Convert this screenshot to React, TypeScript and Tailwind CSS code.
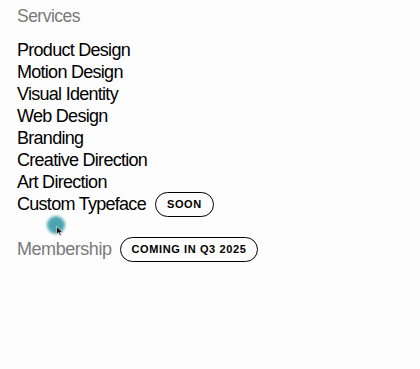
import React from "react";

const services = [
  "Product Design",
  "Motion Design",
  "Visual Identity",
  "Web Design",
  "Branding",
  "Creative Direction",
  "Art Direction",
];

const Badge = ({ children }: { children: React.ReactNode }) => (
  <span className="inline-flex h-[25px] shrink-0 items-center rounded-full border-[1.5px] border-black px-[11px] text-[11px] leading-none font-bold uppercase tracking-[0.055em] text-black">
    {children}
  </span>
);

export default function App() {
  return (
    <div
      className="relative h-[369px] w-[420px] bg-[#fdfdfd] px-[17px] pt-[5px]"
      style={{ fontFamily: "'Liberation Sans', Arial, sans-serif" }}
    >
      {/* Services */}
      <p className="h-[22px] text-[17.5px] leading-[22px] tracking-[-0.03em] text-[#7a7a7a]">
        Services
      </p>

      <ul className="mt-[12px] text-[18px] leading-[22px] tracking-[-0.04em] text-black">
        {services.map((s) => (
          <li key={s} className="h-[22px]">
            {s}
          </li>
        ))}
        <li className="flex h-[22px] items-center gap-[9px]">
          <span>Custom Typeface</span>
          <Badge>Soon</Badge>
        </li>
      </ul>

      {/* Membership */}
      <div className="mt-[22px] flex h-[24px] items-center gap-[8px]">
        <span className="text-[18px] leading-[24px] tracking-[-0.025em] text-[#7a7a7a]">
          Membership
        </span>
        <Badge>Coming in Q3 2025</Badge>
      </div>

      {/* cursor highlight */}
      <div className="pointer-events-none absolute left-[47px] top-[216px] h-[18px] w-[18px] rounded-full bg-[#1f8ea0] opacity-80 blur-[1.5px]" />
      <svg
        className="pointer-events-none absolute left-[56px] top-[226px]"
        width="8"
        height="11"
        viewBox="0 0 8 11"
      >
        <path
          d="M0.5 0.5 L0.5 8.5 L2.6 6.6 L4 9.8 L5.3 9.2 L4 6.2 L6.8 6.2 Z"
          fill="#111"
          stroke="#fff"
          strokeWidth="0.6"
        />
      </svg>
    </div>
  );
}
